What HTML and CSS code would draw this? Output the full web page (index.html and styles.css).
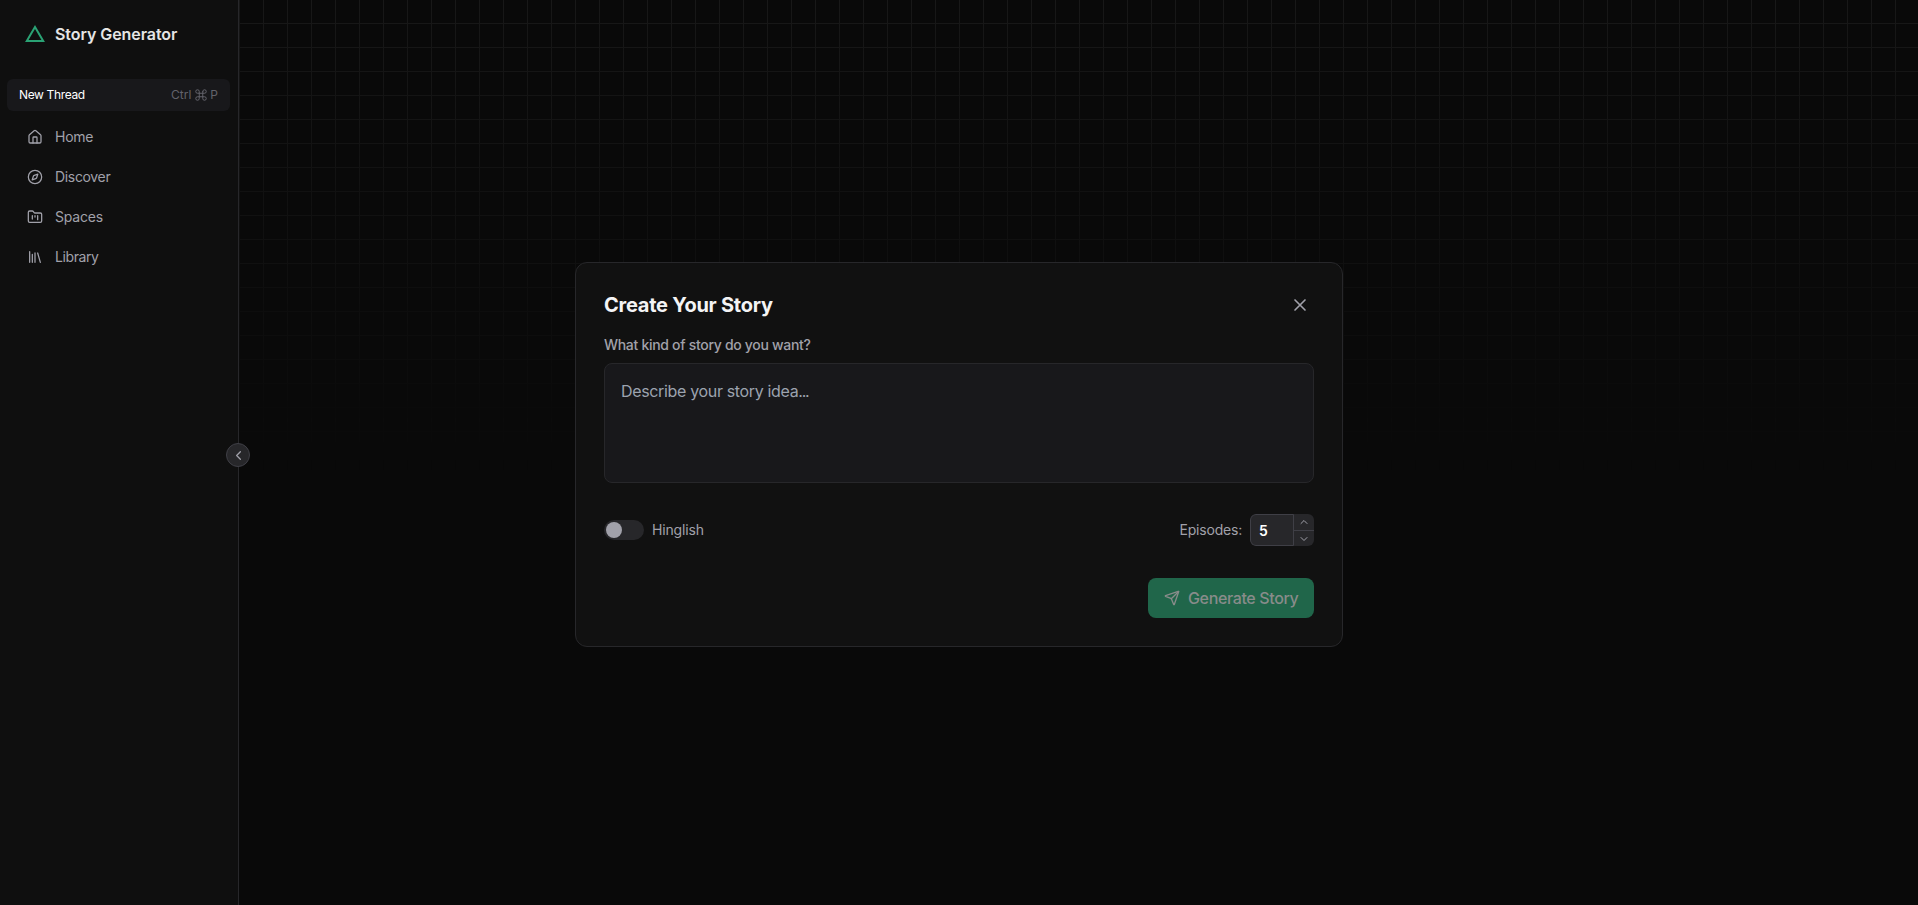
FILE: index.html
```html
<!DOCTYPE html>
<html lang="en">
<head>
<meta charset="utf-8">
<title>Story Generator</title>
<link rel="stylesheet" href="styles.css">
</head>
<body>
<div class="app">
  <aside class="sidebar">
    <div class="brand">
      <svg class="brand-mark" viewBox="0 0 20 20"><path d="M10 3 18.200 17H1.800Z" fill="none" stroke="#2aa274" stroke-width="2"/></svg>
      <span class="brand-name">Story Generator</span>
    </div>
    <button class="new-thread">
      <span class="new-label">New Thread</span>
      <span class="shortcut"><span class="key">Ctrl</span>
        <svg class="cmd" viewBox="0 0 24 24"><path d="M15 6v12a3 3 0 1 0 3-3H6a3 3 0 1 0 3 3V6a3 3 0 1 0-3 3h12a3 3 0 1 0-3-3"/></svg>
        <span>P</span></span>
    </button>
    <nav class="nav">
      <a class="nav-item"><svg class="icon" viewBox="0 0 24 24"><path d="M15 21v-8a1 1 0 0 0-1-1h-4a1 1 0 0 0-1 1v8"/><path d="M3 10a2 2 0 0 1 .709-1.528l7-5.999a2 2 0 0 1 2.582 0l7 5.999A2 2 0 0 1 21 10v9a2 2 0 0 1-2 2H5a2 2 0 0 1-2-2z"/></svg><span class="w-home">Home</span></a>
      <a class="nav-item"><svg class="icon" viewBox="0 0 24 24"><path d="m16.24 7.76-1.804 5.411a2 2 0 0 1-1.265 1.265L7.76 16.24l1.804-5.411a2 2 0 0 1 1.265-1.265z"/><circle cx="12" cy="12" r="10"/></svg><span class="w-discover">Discover</span></a>
      <a class="nav-item"><svg class="icon" viewBox="0 0 24 24"><path d="M4 20h16a2 2 0 0 0 2-2V8a2 2 0 0 0-2-2h-7.93a2 2 0 0 1-1.66-.9l-.82-1.2A2 2 0 0 0 7.930 3H4a2 2 0 0 0-2 2v13c0 1.100.9 2 2 2Z"/><path d="M8 10v5M12 10v2M16 10v6"/></svg><span class="w-spaces">Spaces</span></a>
      <a class="nav-item"><svg class="icon" viewBox="0 0 24 24"><path d="m16 6 4 14M12 6v14M8 8v12M4 4v16"/></svg><span class="w-library">Library</span></a>
    </nav>
    <button class="collapse"><svg viewBox="0 0 24 24"><path d="m15 18-6-6 6-6"/></svg></button>
  </aside>
  <main class="main">
    <section class="dialog">
      <header class="dialog-head">
        <h1 class="title"><span>Create Your Story</span></h1>
        <button class="close"><svg viewBox="0 0 24 24"><path d="M18 6 6 18M6 6l12 12"/></svg></button>
      </header>
      <label class="prompt-label"><span>What kind of story do you want?</span></label>
      <div class="prompt"><span>Describe your story idea<span class="dots">...</span></span></div>
      <div class="options">
        <div class="option"><span class="switch"><span class="knob"></span></span><span class="w-hinglish">Hinglish</span></div>
        <div class="option"><span class="w-episodes">Episodes:</span>
          <div class="stepper"><span class="value">5</span>
            <span class="steps"><span class="step up"><svg viewBox="0 0 24 24"><path d="m18 15-6-6-6 6"/></svg></span><span class="step"><svg viewBox="0 0 24 24"><path d="m6 9 6 6 6-6"/></svg></span></span>
          </div>
        </div>
      </div>
      <footer class="actions">
        <button class="generate"><svg viewBox="0 0 24 24"><path d="M14.536 21.686a.5.5 0 0 0 .937-.024l6.500-19a.496.496 0 0 0-.635-.635l-19 6.500a.5.5 0 0 0-.024.937l7.930 3.180a2 2 0 0 1 1.112 1.110z"/><path d="m21.854 2.147-10.940 10.939"/></svg><span>Generate Story</span></button>
      </footer>
    </section>
  </main>
</div>
</body>
</html>
```
FILE: styles.css
```css
* { box-sizing: border-box; }
body { margin: 0; background: #090909; color: #a1a1aa; font: 14px/20px Inter, "Liberation Sans", sans-serif; }
button { font: inherit; color: inherit; border: 0; background: none; padding: 0; }
svg { display: block; fill: none; stroke: currentColor; stroke-width: 2; stroke-linecap: round; stroke-linejoin: round; flex: none; }
.app { display: flex; height: 905px; overflow: hidden; }
.sidebar { position: relative; flex: none; width: 239px; background: #0f0f0f; border-right: 1px solid #27272a; padding: 20px 8px 0 7px; z-index: 2; }
.brand { display: flex; align-items: center; height: 28px; gap: 10px; padding-left: 18px; }
.brand-mark { width: 20px; height: 20px; stroke-linejoin: miter; }
.brand-name { color: #e5e5e5; font-size: 16px; font-weight: 600; letter-spacing: -.07px; }
.new-thread { display: flex; align-items: center; justify-content: space-between; width: 223px; height: 32px; margin-top: 31px; padding: 0 12px; border-radius: 6px; background: #18181b; font-size: 12px; }
.new-label { color: #fff; letter-spacing: -.36px; }
.shortcut { display: flex; align-items: center; gap: 3px; color: #63636b; }
.cmd { width: 14px; height: 14px; margin: 0 -.5px; stroke-width: 1.7; }
.nav { display: flex; flex-direction: column; margin-top: 6px; }
.nav-item { display: flex; align-items: center; height: 40px; gap: 12px; padding-left: 20px; }
.icon { width: 16px; height: 16px; stroke-width: 1.9; }
.w-home { letter-spacing: -.25px; }
.w-discover { letter-spacing: -.33px; }
.w-spaces { letter-spacing: -.2px; }
.w-library { letter-spacing: -.4px; }
.collapse { position: absolute; right: -12px; top: 443px; width: 24px; height: 24px; border: 1px solid #3f3f46; border-radius: 50%; background: #27272a; display: flex; align-items: center; justify-content: center; }
.collapse svg { width: 15px; height: 15px; }
.main { position: relative; flex: 1; }
.main::before { content: ""; position: absolute; inset: 0; background: linear-gradient(to right, #181818 1px, transparent 1px), linear-gradient(to bottom, #181818 1px, transparent 1px); background-size: 24px 24px; background-position: 0 -1px; -webkit-mask-image: linear-gradient(to bottom, #000, transparent 52%); mask-image: linear-gradient(to bottom, #000, transparent 52%); }
.dialog { position: relative; width: 768px; height: 385px; margin: 262px 0 0 336px; padding: 28px; border: 1px solid #27272a; border-radius: 12px; background: #111; }
.dialog-head { display: flex; align-items: center; justify-content: space-between; height: 28px; }
.title { margin: 0; color: #f4f4f5; font-size: 20px; line-height: 28px; font-weight: 700; letter-spacing: -.25px; }
.close { margin-right: 4px; }
.close svg { width: 20px; height: 20px; }
.prompt-label { display: block; margin-top: 16px; height: 20px; line-height: 20px; font-weight: 500; letter-spacing: -.3px; }
.prompt { margin-top: 8px; height: 120px; border: 1px solid #27272a; border-radius: 8px; background: #18181b; padding: 15px 16px; color: #9ca3af; font-size: 16px; line-height: 24px; letter-spacing: -.34px; }
.dots { letter-spacing: -1.3px; }
.options { display: flex; justify-content: space-between; align-items: center; height: 32px; margin-top: 31px; }
.option { display: flex; align-items: center; gap: 8px; }
.w-hinglish { letter-spacing: -.15px; }
.w-episodes { letter-spacing: -.2px; }
.switch { display: flex; width: 40px; height: 20px; padding: 2px; border-radius: 10px; background: #27272a; }
.knob { width: 16px; height: 16px; border-radius: 50%; background: #a1a1aa; }
.stepper { display: flex; width: 64px; height: 32px; overflow: hidden; border-radius: 6px; background: #27272a; }
.value { flex: 1; border: 1px solid #3f3f46; border-radius: 6px 0 0 6px; padding-left: 8px; line-height: 31px; color: #fff; font-size: 14px; font-weight: 600; }
.steps { width: 20px; }
.step { display: flex; height: 16px; align-items: center; justify-content: center; }
.step svg { width: 12px; height: 12px; }
.up { height: 17px; border-bottom: 1px solid #3f3f46; }
.actions { display: flex; justify-content: flex-end; margin-top: 32px; }
.generate { display: flex; align-items: center; width: 166px; height: 40px; padding: 0 16px; gap: 8px; border-radius: 8px; background: #20664a; color: #888c8a; font-size: 16px; font-weight: 500; letter-spacing: -.36px; white-space: nowrap; }
.generate span { padding-bottom: 1px; }
.generate svg { width: 16px; height: 16px; }
```
